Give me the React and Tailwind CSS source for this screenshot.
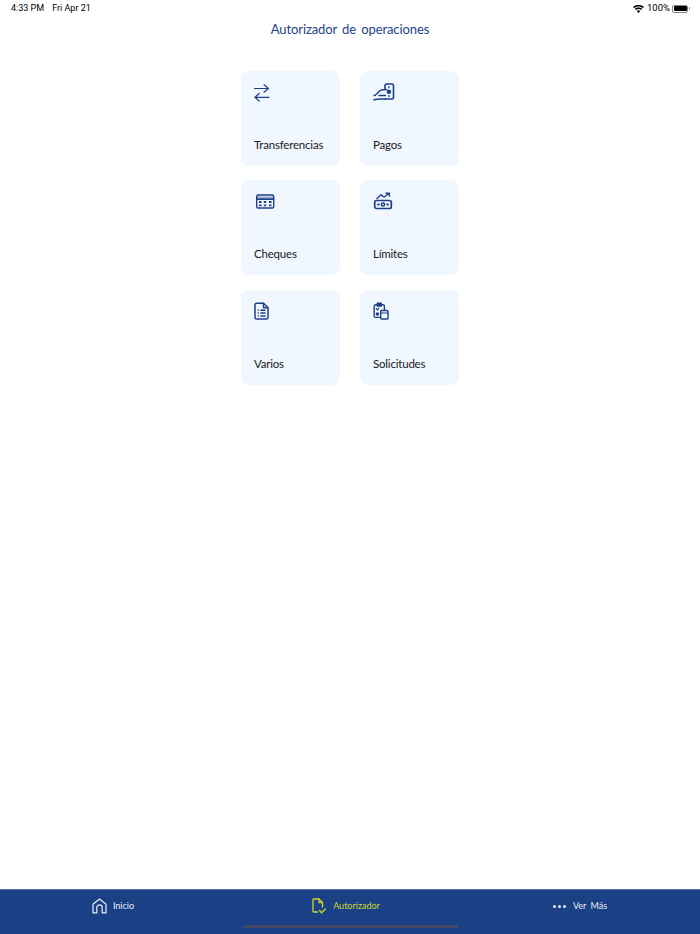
const navy = "#1c3f8a";

function Icon({ children, sw = 1.4 }) {
  return (
    <svg width="22" height="22" viewBox="0 0 22 22" fill="none" stroke={navy} strokeWidth={sw} strokeLinecap="round" strokeLinejoin="round">
      {children}
    </svg>
  );
}

const Transfer = () => (
  <Icon sw={1.2}>
    <path d="M0.5 6.5H14.5M10 2.8L14.5 6.5L10 10.2" />
    <path d="M15 15.3H1M5.2 11.5L1 15.3L5.2 19" />
  </Icon>
);
const Pagos = () => (
  <Icon sw={1.4}>
    <path d="M12 6.5V3.5C12 2.7 12.7 2 13.5 2H19C19.8 2 20.5 2.7 20.5 3.5V15.5C20.5 16.3 19.8 17 19 17H12.5" strokeWidth="1.6" />
    <path d="M1 13.5C3.5 13.5 5 9.5 8 8.2C9.5 7.6 11 7.5 13.5 7.5" />
    <path d="M6 13.5H12.5" />
    <path d="M1 17.8C3 17 5 17 8 17H12.5" strokeWidth="1.6" />
    <circle cx="15.9" cy="9.7" r="2.2" fill={navy} stroke="none" />
    <path d="M15.9 4.8V5.6M15.9 13.6V14.4" />
  </Icon>
);
const Cheques = () => (
  <Icon sw={1.4}>
    <rect x="2.7" y="4" width="17" height="13" rx="1.6" />
    <path d="M3 5.5H19.5V8H3Z" fill={navy} fillOpacity="0.45" stroke="none" />
    <path d="M3 8.2H19.5" />
    <path d="M5 11H7.5M5 14.3H7.5M9.8 11H12.2M9.8 14.3H12.2M15 11H17.5M15 14.3H17.5" strokeWidth="1.8" strokeLinecap="butt" />
  </Icon>
);
const Limites = () => (
  <Icon sw={1.5}>
    <rect x="1.7" y="9.5" width="16.6" height="8" rx="1.8" strokeWidth="1.7" />
    <circle cx="10" cy="13.5" r="1.6" />
    <path d="M5 13.5H5.8M14.2 13.5H15" strokeWidth="1.8" />
    <path d="M4 7.5L8 3.8L11 6L16 2.5M13 2.2H16.3V5" />
  </Icon>
);
const Varios = () => (
  <Icon sw={1.5}>
    <path d="M1 3.8C1 2.9 1.7 2.2 2.6 2.2H9.5L14 6.8V16.4C14 17.3 13.3 18 12.4 18H2.6C1.7 18 1 17.3 1 16.4V3.8Z" />
    <path d="M9.5 2.2V6.8H14" />
    <path d="M3.6 9.2H4.8M3.6 12H4.8M3.6 14.9H4.8M6.4 9.2H11.5M6.4 12H11.5M6.4 14.9H11.5" strokeWidth="1.5" strokeLinecap="butt" />
  </Icon>
);
const Solicitudes = () => (
  <Icon sw={1.4}>
    <path d="M4 3.8H2.6C1.8 3.8 1.2 4.4 1.2 5.2V15C1.2 15.8 1.8 16.4 2.6 16.4H7" />
    <path d="M4.2 2.2H8.3V5H4.2V2.2Z" fill={navy} />
    <path d="M8.5 3.8H10C10.8 3.8 11.4 4.4 11.4 5.2V8.5" />
    <path d="M3.2 7.5L4.6 9L5.8 7.3" strokeWidth="1.1" />
    <circle cx="4.4" cy="13" r="1.7" fill={navy} stroke="none" />
    <rect x="7.7" y="9.5" width="7.3" height="8.5" rx="1" />
    <path d="M8 12H14.7" strokeWidth="1.2" />
  </Icon>
);

const cards = [
  ["Transferencias", Transfer],
  ["Pagos", Pagos],
  ["Cheques", Cheques],
  ["Límites", Limites],
  ["Varios", Varios],
  ["Solicitudes", Solicitudes],
];

export default function App() {
  return (
    <div className="flex h-[934px] w-[700px] flex-col overflow-hidden bg-white font-['Lato',sans-serif]">
      <div className="flex h-[16px] items-center justify-between pl-[11px] pr-[10px] pt-[1px] font-['Roboto',sans-serif] text-black">
        <div className="flex gap-[8px] text-[9px]">
          <span>4:33 PM</span>
          <span>Fri Apr 21</span>
        </div>
        <div className="flex items-center gap-[2px] text-[9.5px]">
          <svg width="11" height="8" viewBox="0 0 11 8" className="mr-[1px]">
            <path d="M5.5 8L3.7 5.9C4.8 5 6.2 5 7.3 5.9L5.5 8ZM2.8 4.9L1.8 3.8C3.9 2 7.1 2 9.2 3.8L8.2 4.9C6.6 3.6 4.4 3.6 2.8 4.9ZM1 3L0 1.9C3.1 -0.6 7.9 -0.6 11 1.9L10 3C7.4 0.9 3.6 0.9 1 3Z" fill="#000" />
          </svg>
          <span>100%</span>
          <div className="flex items-center gap-[1px]">
            <div className="flex h-[8px] w-[16px] rounded-[2px] border border-[#888] p-[0.5px]">
              <div className="flex-1 rounded-[1px] bg-black" />
            </div>
            <div className="h-[3px] w-[1px] bg-gray-400" />
          </div>
        </div>
      </div>

      <h1 className="mt-[3px] text-center text-[13px] font-normal leading-[20px] tracking-[-0.1px] text-[#1c3f8a] [word-spacing:2px]">
        Autorizador de operaciones
      </h1>

      <div className="mx-auto mt-[31.8px] grid w-[218px] grid-cols-2 gap-x-[20px] gap-y-[14.5px]">
        {cards.map(([label, Ico]) => (
          <div key={label} className="flex h-[95px] flex-col justify-between rounded-[8px] bg-[#f0f7ff] pb-[13px] pl-[13px] pt-[11px]">
            <Ico />
            <span className="text-[11.5px] leading-[16px] tracking-[-0.2px] text-[#1a1a1a]">{label}</span>
          </div>
        ))}
      </div>

      <div className="flex-1" />

      <div className="relative flex h-[45px] border-t border-t-[#5a76ad] bg-[#1c4086] text-[9px]">
        <div className="flex w-[233px] items-start justify-center pt-[8px] pr-[7px] text-[#e8edf5]">
          <div className="flex items-center gap-[6px]">
            <svg width="15" height="16" viewBox="0 0 15 16" fill="none" stroke="#e8edf5" strokeWidth="1.2" strokeLinejoin="round">
              <path d="M1 14.8V6.3L7.5 1L14 6.3V14.8H10.2V9.5C10.2 8 9 6.9 7.5 6.9C6 6.9 4.8 8 4.8 9.5V14.8H1Z" />
            </svg>
            <span className="pb-[1px]">Inicio</span>
          </div>
        </div>
        <div className="flex w-[234px] items-start justify-center pt-[8px] pr-[8px] text-[#c6d92b]">
          <div className="flex items-center gap-[7px]">
            <svg width="14" height="16" viewBox="0 0 14 16" fill="none" stroke="#c6d92b" strokeWidth="1.3" strokeLinejoin="round" strokeLinecap="round">
              <path d="M5.5 14H1.8C1.3 14 1 13.6 1 13.2V1.8C1 1.4 1.3 1 1.8 1H7L10.5 4.5V9" />
              <path d="M7 1V4.5H10.5" />
              <path d="M7.5 12.5L9.5 14.8L13.5 11" />
            </svg>
            <span className="pb-[1px]">Autorizador</span>
          </div>
        </div>
        <div className="flex w-[233px] items-start justify-center pt-[8px] pr-[7px] text-[#e8edf5]">
          <div className="flex h-[16px] items-center gap-[7px]">
            <div className="flex gap-[2px]">
              <span className="h-[3px] w-[3px] rounded-full bg-[#e8edf5]" />
              <span className="h-[3px] w-[3px] rounded-full bg-[#e8edf5]" />
              <span className="h-[3px] w-[3px] rounded-full bg-[#e8edf5]" />
            </div>
            <span className="pb-[1px] [word-spacing:2px]">Ver Más</span>
          </div>
        </div>
        <div className="absolute bottom-[6px] left-[243px] h-[3px] w-[215px] rounded-full bg-[#444a66]" />
      </div>
    </div>
  );
}
